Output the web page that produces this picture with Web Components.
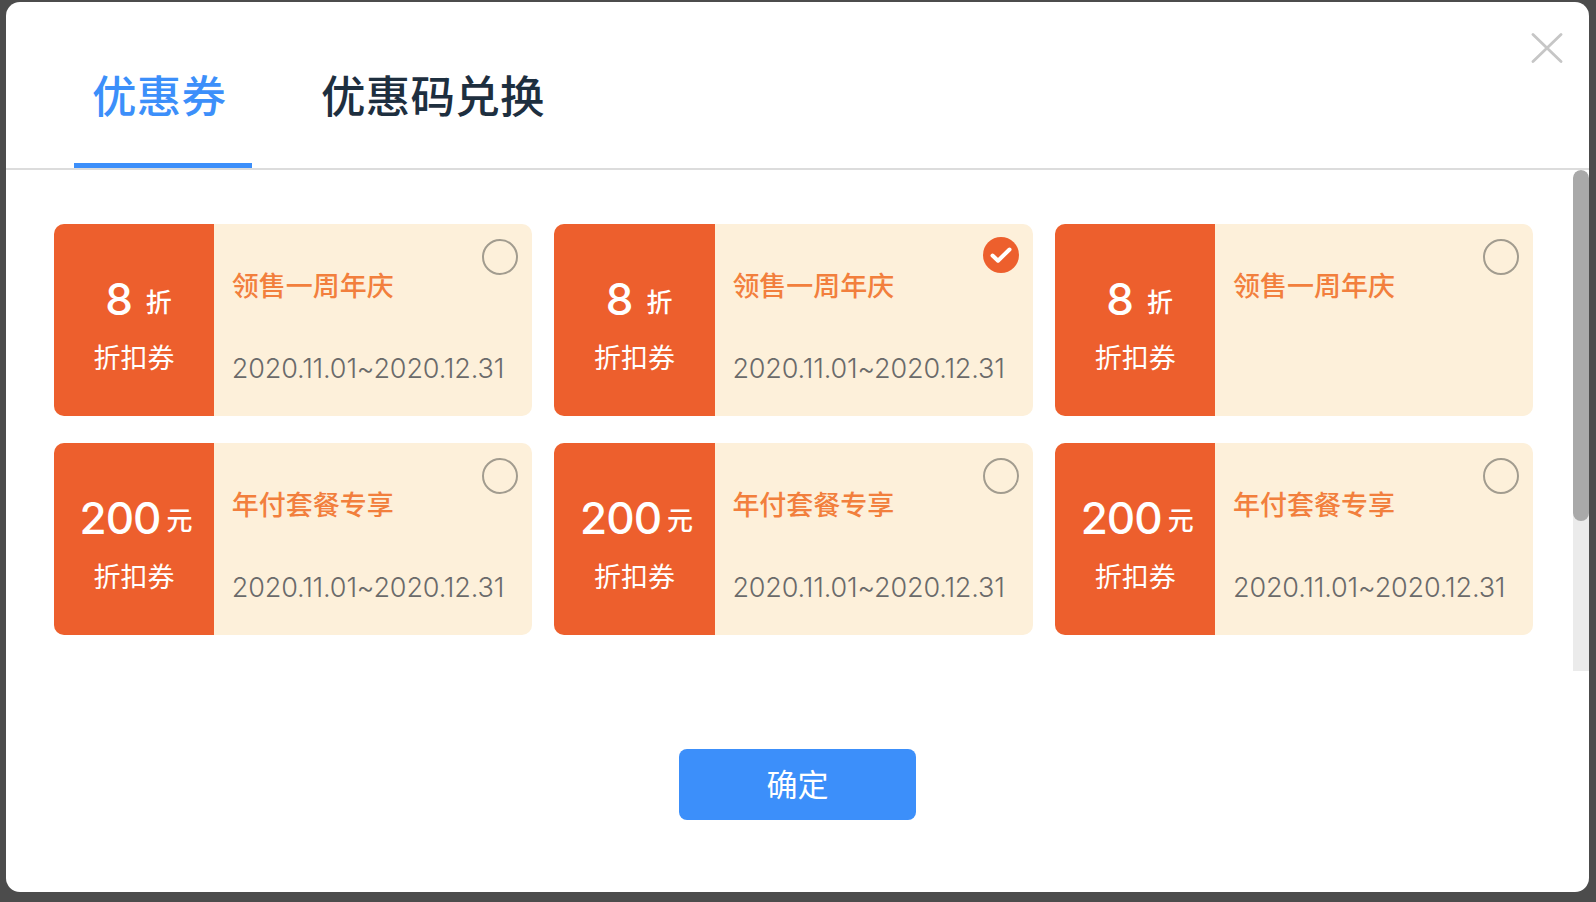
<!DOCTYPE html>
<html lang="zh-CN"><head><meta charset="utf-8"><title>优惠券</title>
<style>
html,body{margin:0;padding:0;height:902px;overflow:hidden;background:#4c4c4c}
body{font-family:Inter,"Noto Sans CJK SC",sans-serif;display:flex;flex-direction:column;padding:2px 6px 0 6px;box-sizing:border-box}
</style></head><body>
<coupon-modal>
  <tab-item slot="tabs" active>优惠券</tab-item>
  <tab-item slot="tabs">优惠码兑换</tab-item>
  <coupon-card num="8" unit="折" title-text="领售一周年庆" date="2020.11.01~2020.12.31"></coupon-card>
  <coupon-card num="8" unit="折" title-text="领售一周年庆" date="2020.11.01~2020.12.31" checked></coupon-card>
  <coupon-card num="8" unit="折" title-text="领售一周年庆"></coupon-card>
  <coupon-card num="200" unit="元" title-text="年付套餐专享" date="2020.11.01~2020.12.31"></coupon-card>
  <coupon-card num="200" unit="元" title-text="年付套餐专享" date="2020.11.01~2020.12.31"></coupon-card>
  <coupon-card num="200" unit="元" title-text="年付套餐专享" date="2020.11.01~2020.12.31"></coupon-card>
  <primary-button slot="footer">确定</primary-button>
</coupon-modal>
<script>
const CJK='"Noto Sans CJK SC",sans-serif';
class Base extends HTMLElement{
  render(html){ if(!this.shadowRoot) this.attachShadow({mode:'open'}); this.shadowRoot.innerHTML=html; }
}
customElements.define('tab-item',class extends Base{connectedCallback(){this.render(`<style>
:host{display:block;box-sizing:border-box;height:166px;padding:0 26px 0 18.5px;margin-right:50px;font:500 44.5px/1 ${CJK};letter-spacing:.3px;color:#1e2f3f;position:relative}
:host([active]){color:#3c8ffa}
.t{display:block;padding-top:70px}
:host([active])::after{content:"";position:absolute;left:0;right:0;bottom:0;height:5px;background:#3c8ffa}
</style><span class="t"><slot></slot></span>`)}});
customElements.define('primary-button',class extends Base{connectedCallback(){this.render(`<style>
:host{display:flex;justify-content:center;width:237px;height:71px;box-sizing:border-box;padding-top:18px;border-radius:8px;background:#3c8ffa;color:#fff;font:400 31px/1 ${CJK}}
</style><slot></slot>`)}});
customElements.define('coupon-card',class extends Base{connectedCallback(){
  const n=this.getAttribute('num'),u=this.getAttribute('unit'),t=this.getAttribute('title-text'),d=this.getAttribute('date')||'',c=this.hasAttribute('checked');
  this.render(`<style>
:host{display:flex;height:192px;border-radius:10px;overflow:hidden;background:#fdf0da;position:relative}
.l{width:160.6px;flex:none;background:#ed5f2d;color:#fff;display:flex;flex-direction:column;align-items:center}
.amt{display:flex;align-items:flex-start;height:44px;margin-top:53px;padding-left:${n==='8'?9:4}px}
.n{font:500 44px/44px Inter,${CJK};letter-spacing:${n==='8'?0:-1}px}
.u{font:500 26px/44px ${CJK};margin-left:${n==='8'?13:6}px;margin-top:${n==='8'?2:1}px}
.k{font:400 27px/1 ${CJK};margin-top:22px}
.r{flex:1;padding-left:17.5px;min-width:0}
.ti{font:500 27px/1 ${CJK};color:#f27f3d;margin-top:47px}
.d{font:300 27px/1 Inter,${CJK};color:#6a6a6a;margin-top:57px;letter-spacing:-.15px;white-space:nowrap}
.radio{position:absolute;top:15px;right:14px;width:36px;height:36px;box-sizing:border-box;border:2px solid #a29c8f;border-radius:50%}
svg{position:absolute;top:13px;right:14px;width:36px;height:36px}
</style>
<div class="l"><div class="amt"><span class="n">${n}</span><span class="u">${u}</span></div><div class="k">折扣券</div></div>
<div class="r"><div class="ti">${t}</div>${d?`<div class="d">${d}</div>`:''}</div>
${c?`<svg viewBox="0 0 36 36"><circle cx="18" cy="18" r="18" fill="#ed5f2d"/><path d="M9.5 18.5l5.5 5.2L26.5 12.5" fill="none" stroke="#fff" stroke-width="4" stroke-linecap="round" stroke-linejoin="round"/></svg>`:`<div class="radio"></div>`}`);
}});
customElements.define('coupon-modal',class extends Base{connectedCallback(){this.render(`<style>
:host{display:flex;flex-direction:column;height:890px;width:1583px;background:#fff;border-radius:14px;overflow:hidden;position:relative}
header{display:flex;padding-left:67.5px;height:166px;border-bottom:2px solid #dcdcdc;flex:none}
.body{display:flex;height:501px;flex:none}
.grid{flex:1;display:grid;grid-template-columns:repeat(3,478.6px);grid-auto-rows:192px;gap:27px 22px;padding:54px 0 0 47.7px;align-content:start}
.track{width:16px;flex:none;background:#ebebeb;border-radius:8px 8px 0 0;overflow:hidden}
.thumb{height:351px;background:#a9a9a9;border-radius:8px}
footer{display:flex;justify-content:center;margin-top:78px}
.close{position:absolute;top:31px;right:26px;width:32px;height:30px}
</style>
<header><slot name="tabs"></slot></header>
<div class="body"><div class="grid"><slot></slot></div><div class="track"><div class="thumb"></div></div></div>
<footer><slot name="footer"></slot></footer>
<svg class="close" viewBox="0 0 32 30"><path d="M2 1.5L30 28.5M30 1.5L2 28.5" stroke="#c6c6c6" stroke-width="2.8" stroke-linecap="round" fill="none"/></svg>`)}});
</script>
</body></html>
